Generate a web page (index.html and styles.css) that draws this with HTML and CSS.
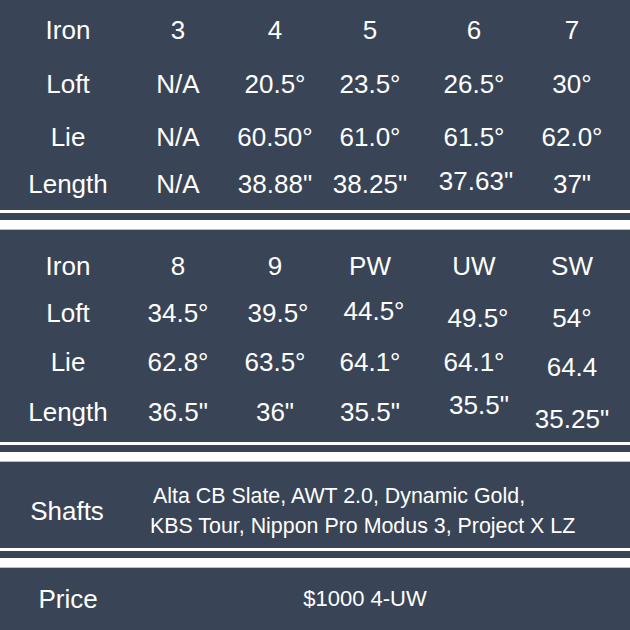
FILE: index.html
```html
<!DOCTYPE html>
<html lang="en">
<head>
<meta charset="utf-8">
<title>Iron specs</title>
<link rel="stylesheet" href="styles.css">
</head>
<body>
<main class="sheet">
  <section class="specs specs-a">
    <div class="cell">Iron</div><div class="cell">3</div><div class="cell">4</div><div class="cell">5</div><div class="cell">6</div><div class="cell">7</div>
    <div class="cell">Loft</div><div class="cell">N/A</div><div class="cell">20.5°</div><div class="cell">23.5°</div><div class="cell">26.5°</div><div class="cell">30°</div>
    <div class="cell">Lie</div><div class="cell">N/A</div><div class="cell">60.50°</div><div class="cell">61.0°</div><div class="cell">61.5°</div><div class="cell">62.0°</div>
    <div class="cell">Length</div><div class="cell">N/A</div><div class="cell">38.88"</div><div class="cell">38.25"</div><div class="cell up3 r2">37.63"</div><div class="cell">37"</div>
  </section>
  <div class="sep"></div>
  <section class="specs specs-b">
    <div class="cell">Iron</div><div class="cell">8</div><div class="cell">9</div><div class="cell">PW</div><div class="cell">UW</div><div class="cell">SW</div>
    <div class="cell">Loft</div><div class="cell">34.5°</div><div class="cell r3">39.5°</div><div class="cell up2 r4">44.5°</div><div class="cell dn5 r4">49.5°</div><div class="cell dn5">54°</div>
    <div class="cell">Lie</div><div class="cell">62.8°</div><div class="cell">63.5°</div><div class="cell">64.1°</div><div class="cell">64.1°</div><div class="cell dn5">64.4</div>
    <div class="cell">Length</div><div class="cell">36.5"</div><div class="cell">36"</div><div class="cell">35.5"</div><div class="cell up7 r5">35.5"</div><div class="cell dn7">35.25"</div>
  </section>
  <div class="sep"></div>
  <section class="row shafts">
    <div class="label">Shafts</div>
    <div class="shaft-list">
      <div class="line1">Alta CB Slate, AWT 2.0, Dynamic Gold,</div>
      <div>KBS Tour, Nippon Pro Modus 3, Project X LZ</div>
    </div>
  </section>
  <div class="sep"></div>
  <section class="row price">
    <div class="label">Price</div>
    <div class="price-value">$1000 4-UW</div>
  </section>
</main>
</body>
</html>
```

FILE: styles.css
```css
html, body {
  margin: 0;
  padding: 0;
  background: #394556;
}

body {
  width: 630px;
  height: 630px;
  overflow: hidden;
  font-family: "Liberation Sans", Arial, sans-serif;
  color: #ffffff;
}

.sheet {
  display: flex;
  flex-direction: column;
}

.specs {
  display: grid;
  grid-template-columns: 136px 84px 110px 80px 128px 68px;
  align-items: center;
  justify-items: center;
  font-size: 26px;
  line-height: 26px;
}

.specs-a {
  height: 210px;
  grid-template-rows: 59px 50px 56px 38px;
  align-content: start;
}

.specs-b {
  height: 213px;
  box-sizing: border-box;
  padding-top: 12px;
  grid-template-rows: 50px 44px 54px 46px;
  align-content: start;
}

.cell {
  white-space: nowrap;
}

.up2 { padding-bottom: 4px; }
.up3 { padding-bottom: 6px; }
.up7 { padding-bottom: 14px; }
.dn5 { padding-top: 10px; }
.dn7 { padding-top: 14px; }
.r2 { padding-left: 4px; }
.r3 { padding-left: 6px; }
.r4 { padding-left: 8px; }
.r5 { padding-left: 10px; }

.sep {
  height: 7px;
  border-top: 3px solid #ffffff;
  border-bottom: 9px solid #ffffff;
  box-shadow: 0 1px 0 #b9bfc8;
  position: relative;
}

.row {
  display: grid;
  grid-template-columns: 136px 458px;
  align-items: center;
  box-sizing: border-box;
}

.label {
  font-size: 26px;
  line-height: 26px;
  text-align: center;
}

.shafts {
  height: 87px;
  padding-top: 12px;
}

.shafts .label {
  padding-right: 2px;
}

.shaft-list {
  font-size: 21.4px;
  line-height: 30px;
  padding-left: 14px;
}

.shaft-list .line1 {
  padding-left: 3px;
}

.price {
  height: 62px;
  padding-top: 2px;
}

.price-value {
  font-size: 22px;
  text-align: center;
}
```
